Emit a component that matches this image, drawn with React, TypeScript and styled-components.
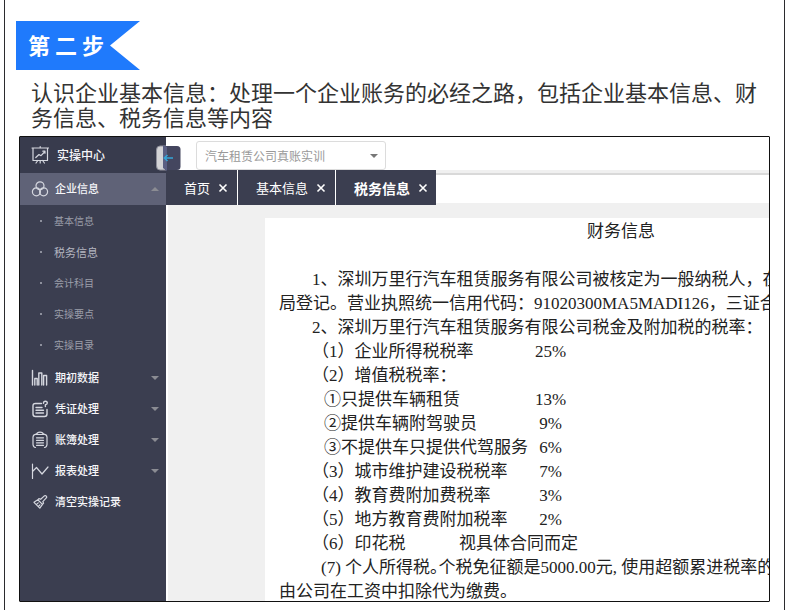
import React from "react";
import styled, { createGlobalStyle, css } from "styled-components";

const SANS = `"Noto Sans CJK SC", "Noto Sans", sans-serif`;

const GlobalStyle = createGlobalStyle`
  *, *::before, *::after { box-sizing: border-box; }
  body { margin: 0; background: #fff; font-family: ${SANS}; }
  h1, h2, p, ul { margin: 0; padding: 0; }
  ul { list-style: none; }
  button, select { font-family: inherit; border: 0; padding: 0; background: none; cursor: pointer; }
`;

const Page = styled.main`
  min-height: 100vh;
  margin: 0 4px;
  padding: 21px 14px 8px;
  border: solid #2b2b2e;
  border-width: 0 1px;
`;

const StepBanner = styled.h1`
  width: 124px;
  height: 49px;
  margin-left: -3px;
  padding-left: 12px;
  line-height: 46px;
  font-size: 22px;
  font-weight: 700;
  color: #fff;
  background: #1f7afc;
  clip-path: polygon(0 0, 100% 0, 94px 50%, 100% 100%, 0 100%);
`;

const Intro = styled.p`
  padding: 9px 0 7px 12px;
  font-size: 22px;
  line-height: 25px;
  color: #333;
`;

const Shot = styled.section`
  position: relative;
  display: flex;
  overflow: hidden;
  border: 1px solid #111;
  border-radius: 1px;
`;

const Sidebar = styled.nav`
  flex: 0 0 146px;
  background: #3b3e50;
`;

const NavButton = styled.button<{ $kind?: "head" | "active" }>`
  display: flex;
  align-items: center;
  gap: 6px;
  width: 100%;
  height: 31px;
  padding: 0 7px 0 11px;
  font-size: 11px;
  font-weight: 500;
  color: #f6f6f9;
  ${(p) => p.$kind === "head" && css`
    height: 36px;
    gap: 8px;
    font-size: 12px;
    background: #383b4d;
  `}
  ${(p) => p.$kind === "active" && css`
    height: 32px;
    background: #5f6277;
  `}
  svg { flex: none; }
`;

const NavText = styled.span`
  flex: 1;
  padding-bottom: 2px;
  text-align: left;
  white-space: nowrap;
`;

const SubMenu = styled.ul`
  padding-bottom: 2px;
`;

const SubLink = styled.a<{ $current?: boolean }>`
  display: flex;
  align-items: center;
  gap: 12px;
  height: 31px;
  padding-left: 20px;
  font-size: ${(p) => (p.$current ? 11 : 10)}px;
  color: ${(p) => (p.$current ? "#b4b6c0" : "#9c9eaa")};
  text-decoration: none;
  &::before {
    content: "";
    width: 2px;
    height: 2px;
    background: #8d909d;
  }
`;

const Workspace = styled.div`
  flex: 1;
  min-width: 0;
  display: flex;
  flex-direction: column;
`;

const TopBar = styled.div`
  height: 33px;
  padding: 4px 0 0 30px;
  background: #fff;
`;

const SelectBox = styled.label`
  display: grid;
  align-items: center;
  width: 190px;
  height: 29px;
  svg { grid-area: 1 / 1; justify-self: end; margin-right: 8px; pointer-events: none; }
`;

const CompanySelect = styled.select`
  grid-area: 1 / 1;
  width: 100%;
  height: 100%;
  padding: 0 24px 0 8px;
  border: 1px solid #dcdcdc;
  border-radius: 3px;
  appearance: none;
  font-size: 12px;
  color: #999;
  background: #fff;
`;

const TabStrip = styled.div`
  display: flex;
  align-items: flex-start;
  gap: 1px;
  background: #f0f0f0;
`;

const Tab = styled.div`
  display: flex;
  align-items: center;
  gap: 8px;
  height: 35px;
  padding: 0 9px 0 18px;
  background: #3b3e50;
  box-shadow: 1px 0 #fff;
  &:last-of-type { padding-right: 8px; box-shadow: none; }
`;

const TabLabel = styled.button<{ $current?: boolean }>`
  font-size: ${(p) => (p.$current ? 14 : 13)}px;
  font-weight: ${(p) => (p.$current ? 700 : 400)};
  color: #fff;
  white-space: nowrap;
`;

const TabClose = styled.button`
  display: flex;
`;

const StripRest = styled.span`
  flex: 1;
  height: 30px;
  margin: 3px 0 0 -1px;
  border-top: 2px solid #d9d9d9;
  background: #fff;
`;

const Canvas = styled.div`
  flex: 1;
  padding: 13px 0 0 97px;
  border-left: 2px solid #fff;
  background: #f0f0f0;
`;

const Document = styled.article`
  width: 712px;
  margin-bottom: -3px;
  padding: 2px 14px 0;
  font-family: "Liberation Serif", "Noto Sans CJK SC", serif;
  font-size: 17px;
  line-height: 24px;
  color: #222;
  background: #fff;
`;

const DocTitle = styled.h2`
  margin-bottom: 24px;
  font-size: 17px;
  font-weight: 400;
  text-align: center;
`;

const Line = styled.p<{ $indent?: boolean }>`
  padding-left: ${(p) => (p.$indent ? 33 : 0)}px;
  white-space: nowrap;
`;

const CompactLine = styled(Line)`
  padding-left: 42px;
  font-feature-settings: "halt";
`;

const RateRow = styled.div<{ $sub?: boolean; $note?: boolean }>`
  display: grid;
  grid-template-columns: ${(p) => (p.$note ? "147px auto" : "222px 33px")};
  margin-left: 33px;
  white-space: nowrap;
  span:first-child { padding-left: ${(p) => (p.$sub ? 12 : 0)}px; }
  span:last-child { text-align: ${(p) => (p.$note ? "left" : "center")}; }
`;

const CollapseButton = styled.button`
  position: absolute;
  left: 135px;
  top: 8px;
  width: 26px;
  height: 26px;
`;

const Icon = ({ children }: { children: React.ReactNode }) => (
  <svg width="18" height="18" viewBox="0 0 18 18" fill="none" stroke="#d5d7df" strokeWidth="1.2" strokeLinecap="round" strokeLinejoin="round" aria-hidden="true">
    {children}
  </svg>
);

const BoardIcon = () => (
  <Icon>
    <path d="M1 2h16.500M2 2v12.500h14.500V2M9.200 .6v1.400M4.800 11.500l3.200-3 2 1.200 4-4.200M11.800 5.200H14v2M6.800 14.500L5 17M9.200 14.500V17M11.600 14.500l1.800 2.500" />
  </Icon>
);
const CirclesIcon = () => (
  <Icon>
    <circle cx="9" cy="5.8" r="4" />
    <circle cx="5.400" cy="11.800" r="4" />
    <circle cx="12.600" cy="11.800" r="4" />
  </Icon>
);
const BarsIcon = () => (
  <Icon>
    <path d="M1.500 1.500v14.500M3.800 16V9.500h2.400V16M7.800 16V4h3v12M12.600 16V6.500h3V16" strokeWidth="1.400" />
  </Icon>
);
const VoucherIcon = () => (
  <Icon>
    <path d="M10.500 3.500H4.500Q2 3.500 2 6v8q0 2.500 2.500 2.500h9q2.500 0 2.500-2.500V9.500M5 7.500h6M5 10.300h7.500M5 13h7.500M12.500 3.200q0-2 1.900-2t1.900 1.800q0 1.400-1.900 1.800V6.500" strokeWidth="1.400" />
  </Icon>
);
const LedgerIcon = () => (
  <Icon>
    <path d="M5 3.200Q2.300 3.600 2 6v7.500q.3 2.800 2.500 3M13 3.200q2.700.4 3 2.800v7.500q-.3 2.800-2.500 3M5.500 3.500Q6 1.200 9 1.200t3.500 2.300zM5.500 6.800h7M5.500 9.300h7M5.500 11.800h7M5.500 14.300h7" />
  </Icon>
);
const TrendIcon = () => (
  <Icon>
    <path d="M1.500 2v14.500M1.500 9.500l4-4 5.500 6.500 6-7" />
  </Icon>
);
const BrushIcon = () => (
  <Icon>
    <path d="M15.300 3.200q.9.900-.2 2L11.800 8.600l.8 1.600-1.100 1.200L6.800 6.800l1.100-1.200 1.800.7 3.400-3.200q1.200-.9 2.200.1zM6.800 6.800L3 9.300l5.800 5.900 2.700-3.800M5.300 11.600l1.900-1.700M7.400 13.500l1.500-1.700" />
  </Icon>
);

const Caret = ({ up, color = "#8b8c93" }: { up?: boolean; color?: string }) => (
  <svg width="8" height="4" viewBox="0 0 8 4" aria-hidden="true">
    <path d={up ? "M0 4L4 0l4 4z" : "M0 0h8L4 4z"} fill={color} />
  </svg>
);

const submenu = ["基本信息", "税务信息", "会计科目", "实操要点", "实操目录"];
const sections = [
  { text: "期初数据", icon: <BarsIcon /> },
  { text: "凭证处理", icon: <VoucherIcon /> },
  { text: "账簿处理", icon: <LedgerIcon /> },
  { text: "报表处理", icon: <TrendIcon /> },
];
const tabs = ["首页", "基本信息", "税务信息"];
const rates: { label: string; value: string; sub?: boolean; note?: boolean }[] = [
  { label: "（1）企业所得税税率", value: "25%" },
  { label: "（2）增值税税率：", value: "" },
  { label: "①只提供车辆租赁", value: "13%", sub: true },
  { label: "②提供车辆附驾驶员", value: "9%", sub: true },
  { label: "③不提供车只提供代驾服务", value: "6%", sub: true },
  { label: "（3）城市维护建设税税率", value: "7%" },
  { label: "（4）教育费附加费税率", value: "3%" },
  { label: "（5）地方教育费附加税率", value: "2%" },
  { label: "（6）印花税", value: "视具体合同而定", note: true },
];

export default function App() {
  return (
    <>
      <GlobalStyle />
      <Page>
        <StepBanner>第 二 步</StepBanner>
        <Intro>
          认识企业基本信息：处理一个企业账务的必经之路，包括企业基本信息、财务信息、税务信息等内容
        </Intro>
        <Shot>
          <Sidebar>
            <NavButton $kind="head"><BoardIcon /><NavText>实操中心</NavText></NavButton>
            <NavButton $kind="active" aria-expanded="true">
              <CirclesIcon /><NavText>企业信息</NavText><Caret up />
            </NavButton>
            <SubMenu>
              {submenu.map((text) => (
                <li key={text}>
                  <SubLink href="#" $current={text === "税务信息"}>{text}</SubLink>
                </li>
              ))}
            </SubMenu>
            {sections.map((s) => (
              <NavButton key={s.text} aria-expanded="false">
                {s.icon}<NavText>{s.text}</NavText><Caret />
              </NavButton>
            ))}
            <NavButton><BrushIcon /><NavText>清空实操记录</NavText></NavButton>
          </Sidebar>
          <Workspace>
            <TopBar>
              <SelectBox>
                <CompanySelect aria-label="实训公司">
                  <option>汽车租赁公司真账实训</option>
                </CompanySelect>
                <Caret color="#777" />
              </SelectBox>
            </TopBar>
            <TabStrip>
              {tabs.map((text) => (
                <Tab key={text}>
                  <TabLabel $current={text === "税务信息"}>{text}</TabLabel>
                  <TabClose aria-label={`关闭${text}`}>
                    <svg width="10" height="10" viewBox="0 0 10 10" stroke="#fff" strokeWidth="1.6" aria-hidden="true">
                      <path d="M1.500 1.500l7 7M8.500 1.500l-7 7" />
                    </svg>
                  </TabClose>
                </Tab>
              ))}
              <StripRest />
            </TabStrip>
            <Canvas>
              <Document>
                <DocTitle>财务信息</DocTitle>
                <Line $indent>1、深圳万里行汽车租赁服务有限公司被核定为一般纳税人，在</Line>
                <Line>局登记。营业执照统一信用代码：91020300MA5MADI126，三证合</Line>
                <Line $indent>2、深圳万里行汽车租赁服务有限公司税金及附加税的税率：</Line>
                {rates.map((r) => (
                  <RateRow key={r.label} $sub={r.sub} $note={r.note}>
                    <span>{r.label}</span>
                    <span>{r.value}</span>
                  </RateRow>
                ))}
                <CompactLine>(7) 个人所得税。个税免征额是5000.00元, 使用超额累进税率的</CompactLine>
                <Line>由公司在工资中扣除代为缴费。</Line>
              </Document>
            </Canvas>
          </Workspace>
          <CollapseButton aria-label="收起菜单">
            <svg width="26" height="26" viewBox="0 0 26 26" aria-hidden="true">
              <path d="M5 1h6v24H5q-3.500 0-3.500-4V5q0-4 3.500-4z" fill="#d3d3d6" stroke="#8f909c" />
              <path d="M10 1h12q3.500 0 3.500 3.500v17q0 3.500-3.500 3.500H10z" fill="#44465f" />
              <path d="M8 0l4 2v24l-4-3z" fill="#5b5f83" />
              <path d="M18 13H9.500M12.500 10l-3.200 3 3.200 3" fill="none" stroke="#35a5d8" strokeWidth="1.500" />
            </svg>
          </CollapseButton>
        </Shot>
      </Page>
    </>
  );
}
